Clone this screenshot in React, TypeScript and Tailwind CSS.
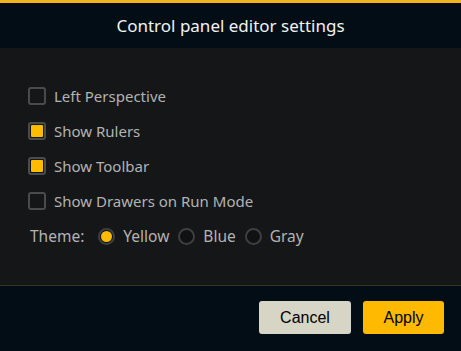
const options = [
  { label: 'Left Perspective', checked: false },
  { label: 'Show Rulers', checked: true },
  { label: 'Show Toolbar', checked: true },
  { label: 'Show Drawers on Run Mode', checked: false },
];

const themes = ['Yellow', 'Blue', 'Gray'];

function Checkbox({ checked }: { checked: boolean }) {
  return (
    <span className="flex h-[18px] w-[18px] items-center justify-center rounded-[3px] border-2 border-[#4a4b4b] bg-[#141617]">
      {checked && <span className="h-[12px] w-[12px] rounded-[1px] bg-[#ffbb00]" />}
    </span>
  );
}

function Radio({ checked }: { checked: boolean }) {
  return (
    <span className="flex h-[17px] w-[17px] shrink-0 items-center justify-center rounded-full border-2 border-[#3e3f3f] bg-[#0f1112]">
      {checked && <span className="h-[11px] w-[11px] rounded-full bg-[#ffbb00]" />}
    </span>
  );
}

export default function App() {
  return (
    <div className="flex h-[351px] w-[461px] flex-col bg-[#141617] font-['Noto_Sans',sans-serif]">
      <div className="h-[3px] bg-[#f2b51e]" />
      <div className="flex h-[45px] items-center justify-center bg-[#020d15] text-[17px] text-[#f2f2f2]">
        Control panel editor settings
      </div>

      <div className="flex-1 px-[28px] pt-[31px] text-[15px] text-[#b3b3b3]">
        {options.map((o) => (
          <div key={o.label} className="flex h-[35px] items-center gap-[8px] pb-[1px]">
            <Checkbox checked={o.checked} />
            <span>{o.label}</span>
          </div>
        ))}
        <div className="flex h-[35px] items-center pl-[2px]">
          <span className="mr-[14px] text-[15.5px]">Theme:</span>
          {themes.map((t, i) => (
            <label key={t} className="mr-[9px] flex items-center gap-[8px] text-[15.5px]">
              <Radio checked={i === 0} />
              <span>{t}</span>
            </label>
          ))}
        </div>
      </div>

      <div className="h-[66px] border-t border-[#35341f] bg-[#020d15] px-[17px] pt-[15px]">
        <div className="flex justify-end gap-[12px] font-['Liberation_Sans',sans-serif] text-[16px] text-black">
          <button className="h-[33px] w-[92px] rounded-[3px] bg-[#d7d5c5]">Cancel</button>
          <button className="h-[33px] w-[81px] rounded-[3px] bg-[#ffb900]">Apply</button>
        </div>
      </div>
    </div>
  );
}
